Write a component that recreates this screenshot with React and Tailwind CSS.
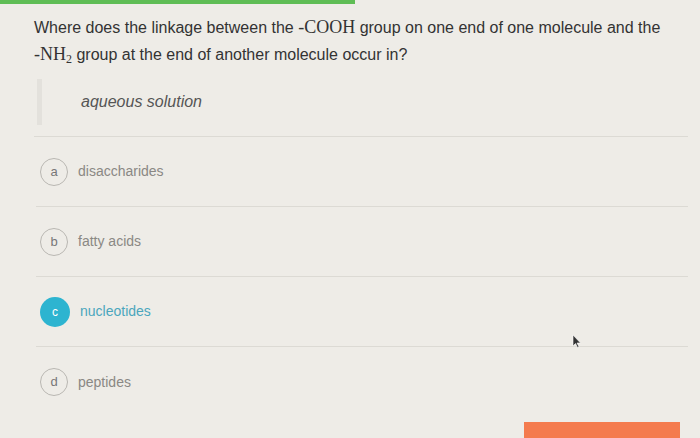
import React from "react";

const options = [
  { key: "a", label: "disaccharides" },
  { key: "b", label: "fatty acids" },
  { key: "c", label: "nucleotides", selected: true },
  { key: "d", label: "peptides" },
];

const Option = ({ opt, last }) => (
  <div
    className={`flex items-center h-[70px] pl-[4px] ${
      last ? "" : "border-b border-[#dcdad4]"
    }`}
  >
    {opt.selected ? (
      <div className="w-[30px] h-[30px] rounded-full bg-[#2db4d0] text-white text-[12px] flex items-center justify-center">
        {opt.key}
      </div>
    ) : (
      <div className="w-[28px] h-[28px] rounded-full border border-[#b9b7b2] text-[#777] text-[13px] flex items-center justify-center">
        {opt.key}
      </div>
    )}
    <span
      className={`ml-[10px] text-[14px] ${
        opt.selected ? "text-[#4ba6bd]" : "text-[#8a8884]"
      }`}
    >
      {opt.label}
    </span>
  </div>
);

export default function App() {
  return (
    <div
      className="relative w-[700px] h-[438px] overflow-hidden bg-[#eeece7]"
      style={{ fontFamily: '"Liberation Sans", Arial, sans-serif' }}
    >
      {/* progress bar */}
      <div className="h-[4px] w-[355px] bg-[#5fbd55]" />

      <div className="pl-[34px] pr-[12px]">
        <p className="mt-[10px] text-[16px] leading-[27px] text-[#333]">
          Where does the linkage between the{" "}
          <span className="text-[18px]" style={{ fontFamily: '"Liberation Serif", serif' }}>
            -COOH
          </span>{" "}
          group on one end of one molecule and the{" "}
          <span className="text-[18px] whitespace-nowrap" style={{ fontFamily: '"Liberation Serif", serif' }}>
            -NH<sub className="text-[12px] leading-none">2</sub>
          </span>{" "}
          group at the end of another molecule occur in?
        </p>

        {/* answer blockquote */}
        <div className="mt-[11px] flex items-stretch h-[46px] border-l-[5px] border-[#e3e1dc] ml-[3px]">
          <span className="ml-[39px] self-center italic text-[16px] text-[#555]">
            aqueous solution
          </span>
        </div>

        <div className="mt-[11px] border-b border-[#dcdad4]" />

        <div className="pl-[2px]">
          {options.map((opt, i) => (
            <Option key={opt.key} opt={opt} last={i === options.length - 1} />
          ))}
        </div>
      </div>

      {/* cursor */}
      <svg className="absolute left-[572px] top-[334px]" width="10" height="14" viewBox="0 0 10 14">
        <path d="M1 1 L1 12 L3.5 9.5 L5.5 13.5 L7 12.8 L5 9 L8.5 9 Z" fill="#333" stroke="#fff" strokeWidth="0.6" />
      </svg>

      {/* submit button */}
      <div className="absolute left-[524px] top-[422px] w-[156px] h-[40px] bg-[#f47b4e] text-white text-[15px] font-bold flex justify-center pt-[13px]">
        Submit
      </div>
    </div>
  );
}
